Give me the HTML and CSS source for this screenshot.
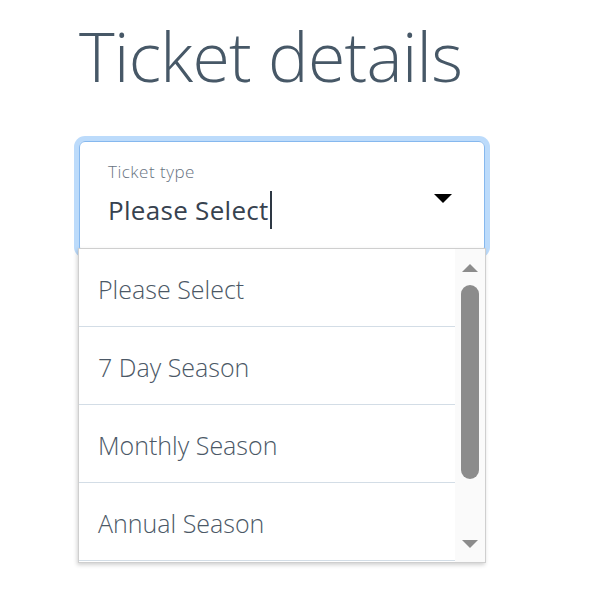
FILE: index.html
```
<!DOCTYPE html>
<html lang="en">
<head>
  <meta charset="UTF-8">
  <meta name="viewport" content="width=device-width, initial-scale=1.0">
  <title>Ticket details</title>
  <link rel="stylesheet" href="styles.css">
</head>
<body>
  <main class="page">
    <h1 class="page__title">Ticket details</h1>
    <div class="select">
      <div class="select__field">
        <span class="select__label">Ticket type</span>
        <span class="select__value">Please Select<span class="select__caret"></span></span>
        <span class="select__arrow"></span>
      </div>
      <div class="select__menu">
        <ul class="select__list">
          <li class="select__option">Please Select</li>
          <li class="select__option">7 Day Season</li>
          <li class="select__option">Monthly Season</li>
          <li class="select__option">Annual Season</li>
          <li class="select__option"></li>
        </ul>
        <div class="scrollbar">
          <span class="scrollbar__up"></span>
          <span class="scrollbar__thumb"></span>
          <span class="scrollbar__down"></span>
        </div>
      </div>
    </div>
  </main>
</body>
</html>
```

FILE: styles.css
```
* {
  box-sizing: border-box;
}

body {
  margin: 0;
  background: #fff;
  font-family: "Open Sans", "Noto Sans", sans-serif;
}

.page {
  padding: 11px 0 30px 79px;
}

.page__title {
  margin: 0;
  font-size: 68px;
  font-weight: 300;
  line-height: 90px;
  letter-spacing: -0.7px;
  color: #475867;
}

.select {
  width: 406px;
  margin-top: 40px;
}

.select__field {
  position: relative;
  display: flex;
  flex-direction: column;
  height: 112px;
  padding: 19px 28px 0;
  border: 1px solid #86b8ee;
  border-radius: 6px;
  box-shadow: 0 0 0 5px #bcdbfb;
}

.select__label {
  font-size: 17px;
  font-weight: 300;
  line-height: 22px;
  letter-spacing: 0.5px;
  color: #67737f;
}

.select__value {
  display: flex;
  align-items: center;
  margin-top: 8px;
  font-size: 26px;
  line-height: 38px;
  letter-spacing: 0.3px;
  color: #37424f;
}

.select__caret {
  width: 2px;
  height: 38px;
  margin-left: 1px;
  background: #2e3844;
}

.select__arrow {
  position: absolute;
  top: 52px;
  right: 32px;
  border-left: 9px solid transparent;
  border-right: 9px solid transparent;
  border-top: 9px solid #000;
}

/* open dropdown, pulled up over the bottom of the field */
.select__menu {
  position: relative;
  display: flex;
  height: 315px;
  margin: -5px -1px 0;
  overflow: hidden;
  background: #fff;
  border: 1px solid #cfcfcf;
  box-shadow: -1px 2px 4px rgba(0, 0, 0, 0.18);
}

.select__list {
  flex: 1;
  margin: 0;
  padding: 0;
  list-style: none;
}

.select__option {
  height: 78px;
  padding: 22px 0 0 19px;
  border-bottom: 1px solid #d3dde6;
  font-size: 25px;
  font-weight: 300;
  line-height: 36px;
  color: #4b5866;
}

.scrollbar {
  display: flex;
  flex-direction: column;
  align-items: center;
  width: 30px;
  padding-top: 15px;
  background: #fafafa;
}

.scrollbar__up,
.scrollbar__down {
  border-left: 8px solid transparent;
  border-right: 8px solid transparent;
}

.scrollbar__up {
  border-bottom: 8px solid #8c8c8c;
}

.scrollbar__down {
  margin-top: 61px;
  border-top: 8px solid #8c8c8c;
}

.scrollbar__thumb {
  width: 18px;
  height: 194px;
  margin-top: 13px;
  margin-right: 1px;
  border-radius: 9px;
  background: #8c8c8c;
}
```
